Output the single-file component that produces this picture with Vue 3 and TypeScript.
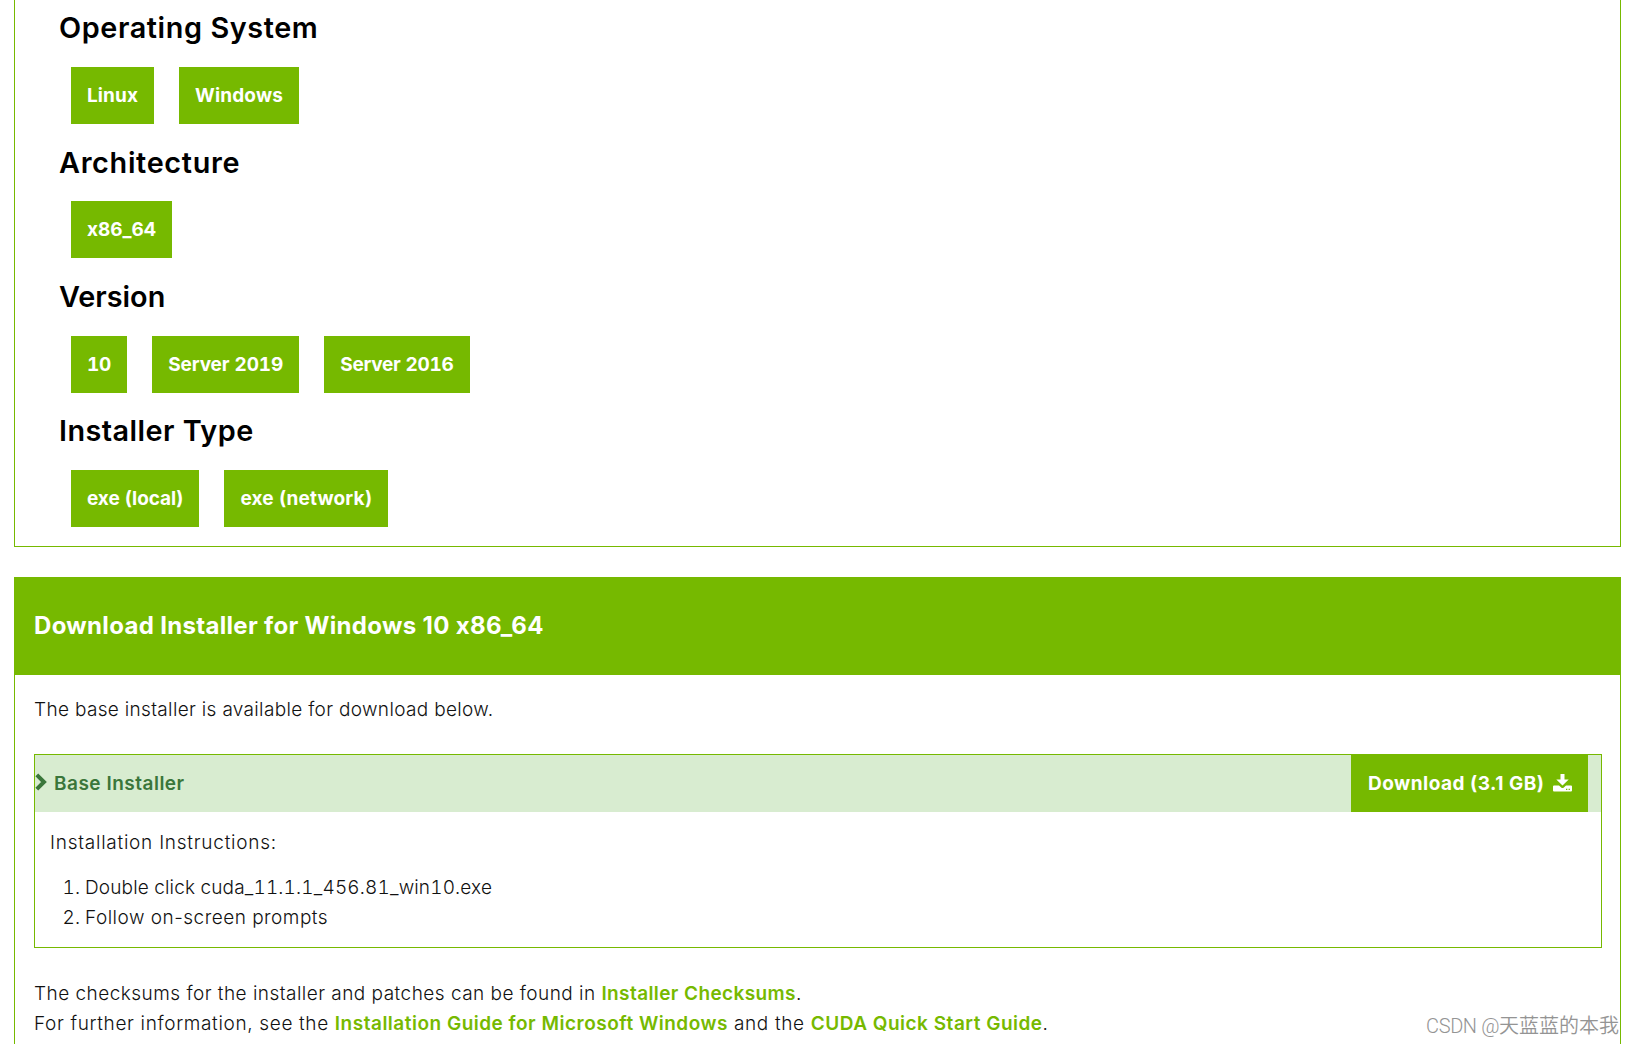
<script setup lang="ts">
interface Label {
  text: string
  // letter-spacing in px
  track: number
}
interface OptionGroup {
  title: Label
  options: Label[]
}

const groups: OptionGroup[] = [
  {
    title: { text: 'Operating System', track: 0.6 },
    options: [
      { text: 'Linux', track: 0.09 },
      { text: 'Windows', track: 0.16 },
    ],
  },
  {
    title: { text: 'Architecture', track: 0.68 },
    options: [{ text: 'x86_64', track: -0.03 }],
  },
  {
    title: { text: 'Version', track: 0 },
    options: [
      { text: '10', track: -0.2 },
      { text: 'Server 2019', track: -0.1 },
      { text: 'Server 2016', track: -0.26 },
    ],
  },
  {
    title: { text: 'Installer Type', track: 0.46 },
    options: [
      { text: 'exe (local)', track: -0.07 },
      { text: 'exe (network)', track: 0.15 },
    ],
  },
]

const steps: Label[] = [
  { text: 'Double click cuda_11.1.1_456.81_win10.exe', track: 0.16 },
  { text: 'Follow on-screen prompts', track: 0.49 },
]

const px = (n: number) => ({ letterSpacing: `${n}px` })
</script>

<template>
  <main class="page">
    <section class="selector">
      <div v-for="g in groups" :key="g.title.text" class="group">
        <h3 :style="px(g.title.track)">{{ g.title.text }}</h3>
        <div class="options">
          <button v-for="o in g.options" :key="o.text" class="btn" :style="px(o.track)">{{ o.text }}</button>
        </div>
      </div>
    </section>

    <section class="download">
      <h4>Download Installer for Windows 10 x86_64</h4>
      <div class="body">
        <p class="intro">The base installer is available for download below.</p>
        <div class="installer">
          <div class="bar">
            <svg class="chevron" viewBox="0 0 12 18" width="12" height="18">
              <path d="M1.8 1.8 9 9l-7.2 7.2" fill="none" stroke="#3a763a" stroke-width="4" />
            </svg>
            <span class="name">Base Installer</span>
            <button class="btn dl">
              <span class="dl-text">Download (3.1 GB)</span>
              <svg class="dl-icon" viewBox="0 0 19 18" width="19" height="18">
                <path d="M7.5 0h4v5.500h4.200L9.500 11.500 3.300 5.500h4.200z" fill="#fff" />
                <path
                  fill-rule="evenodd"
                  d="M1 11.500h5l2.200 1.900a2 2 0 0 0 2.600 0l2.200-1.900H18a1 1 0 0 1 1 1V16.500a1 1 0 0 1-1 1H1a1 1 0 0 1-1-1v-4a1 1 0 0 1 1-1zM13 14.700v1.200h1.300V14.700zM15.600 14.700v1.200h1.300V14.700z"
                  fill="#fff"
                />
              </svg>
            </button>
          </div>
          <div class="instructions">
            <p class="lead">Installation Instructions:</p>
            <ol>
              <li v-for="(s, i) in steps" :key="s.text">
                <span class="num">{{ i + 1 }}.</span><span :style="px(s.track)">{{ s.text }}</span>
              </li>
            </ol>
          </div>
        </div>
        <p class="notes">
          <span class="t1">The checksums for the installer and patches can be found in </span><a class="l1">Installer Checksums</a>.<br />
          <span class="t2">For further information, see the </span><a class="l2">Installation Guide for Microsoft Windows</a><span class="t2"> and the </span><a class="l2">CUDA Quick Start Guide</a>.
        </p>
      </div>
    </section>
    <div class="watermark"><span class="latin">CSDN @</span>天蓝蓝的本我</div>
  </main>
</template>

<style>
body {
  background: #fff;
}
</style>

<style scoped>
.page {
  position: relative;
  box-sizing: border-box;
  height: 1044px;
  overflow: hidden;
  padding: 0 13px 0 14px;
  font: 300 19px/30px Inter, 'Liberation Sans', sans-serif;
  color: #111;
}
h3,
h4,
p,
ol {
  margin: 0;
  padding: 0;
}
.selector {
  box-sizing: border-box;
  height: 547px;
  padding: 10.4px 44px 0;
  border: 1px solid #76b900;
  border-top: 0;
}
.group {
  height: 134.33px;
}
h3 {
  margin-bottom: 20.6px;
  font-size: 28.8px;
  font-weight: 600;
  line-height: 36px;
  color: #000;
}
.options {
  display: flex;
  gap: 25px;
  padding-left: 12px;
}
.btn {
  height: 57px;
  margin: 0;
  padding: 0 16px;
  border: 0;
  background: #76b900;
  color: #fff;
  font: 700 19px/57px Inter, 'Liberation Sans', sans-serif;
  font-feature-settings: 'tnum';
  white-space: nowrap;
}
.download {
  height: 500px;
  margin-top: 30px;
  border: 1px solid #76b900;
  border-top: 0;
}
h4 {
  height: 98px;
  padding-left: 19px;
  background: #76b900;
  color: #fff;
  font-size: 24px;
  font-weight: 700;
  line-height: 97px;
  letter-spacing: 0.32px;
}
.body {
  padding: 20px 18px 0 19px;
}
.intro {
  letter-spacing: 0.33px;
}
.installer {
  box-sizing: border-box;
  height: 194px;
  margin-top: 29px;
  border: 1px solid #76b900;
}
.bar {
  display: flex;
  align-items: center;
  height: 57px;
  padding-right: 13px;
  background: #d8ecd0;
  color: #3a763a;
}
.chevron {
  margin: -3px 7px 0 0;
}
.name {
  font-weight: 600;
  letter-spacing: 0.5px;
}
.dl {
  display: flex;
  align-items: center;
  width: 237px;
  margin-left: auto;
  padding-left: 17px;
}
.dl-text {
  letter-spacing: 0.5px;
  font-feature-settings: normal;
}
.dl-icon {
  margin: -2px 0 0 auto;
}
.instructions {
  padding: 16px 15px 0;
}
.lead {
  letter-spacing: 0.75px;
}
ol {
  margin-top: 15px;
  padding-left: 10px;
  list-style: none;
}
li {
  display: flex;
}
li:first-child,
.num {
  font-feature-settings: 'tnum';
}
.num {
  width: 20px;
  margin-right: 5px;
  text-align: right;
}
.notes {
  margin-top: 31px;
  white-space: nowrap;
}
.t1 {
  letter-spacing: 0.47px;
}
.t2 {
  letter-spacing: 0.65px;
}
a {
  color: #76b900;
  font-weight: 600;
}
.l1 {
  letter-spacing: 0.4px;
}
.l2 {
  letter-spacing: 0.5px;
}
.watermark {
  position: absolute;
  right: 15px;
  bottom: 3px;
  color: #949494;
  font: 350 20px/30px 'Noto Sans CJK SC', sans-serif;
  text-shadow: 1px 1px 0 #fff;
  white-space: nowrap;
}
.latin {
  font-family: Roboto, sans-serif;
  letter-spacing: -0.4px;
}
</style>
